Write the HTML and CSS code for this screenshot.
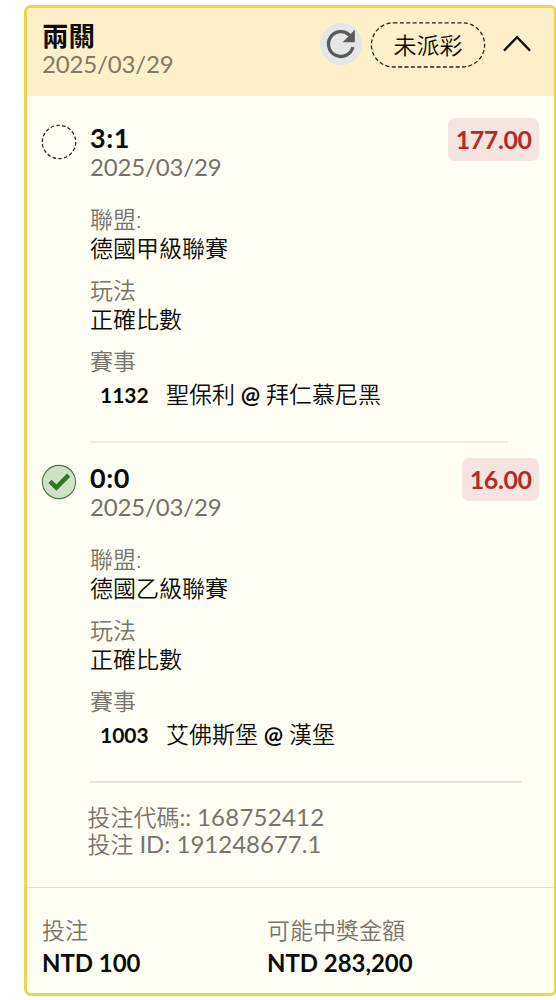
FILE: index.html
```html
<!DOCTYPE html>
<html lang="zh-Hant">
<head>
<meta charset="utf-8">
<title>兩關</title>
<link rel="stylesheet" href="styles.css">
</head>
<body>
<main class="card">
  <header class="card-head">
    <div class="head-text">
      <h1 class="title">兩關</h1>
      <p class="date">2025/03/29</p>
    </div>
    <div class="refresh">
      <svg width="42" height="42" viewBox="0 0 42 42" fill="none"><path d="M29.6 12.2A12.4 12.4 0 1 0 32.9 24.2" stroke="#58595b" stroke-width="3.3"/><path d="M34.8 6.8V19.2H22.6Z" fill="#58595b"/></svg>
    </div>
    <div class="status"><svg class="status-outline" width="116" height="46" viewBox="0 0 116 46" fill="none"><rect x="1.4" y=".8" width="113.2" height="44.2" rx="22.1" stroke="#29251a" stroke-width="1.3" stroke-dasharray="4 2.4"/></svg><span>未派彩</span></div>
    <svg class="chevron" width="28" height="18" viewBox="0 0 28 18" fill="none"><path d="M1 15.6 14 2.2 27 15.6" stroke="#111" stroke-width="2.3"/></svg>
  </header>

  <section class="leg">
    <svg class="mark" width="36" height="36" viewBox="0 0 36 36" fill="none"><circle cx="18" cy="18" r="16.7" stroke="#222" stroke-width="1.2" stroke-dasharray="3.6 2.2"/></svg>
    <div class="leg-body">
      <h2 class="score">3:1</h2>
      <p class="date">2025/03/29</p>
      <dl class="details">
        <dt>聯盟:</dt><dd>德國甲級聯賽</dd>
        <dt>玩法</dt><dd>正確比數</dd>
        <dt>賽事</dt><dd class="match"><b class="code">1132</b><span>聖保利 <span class="at">@</span> 拜仁慕尼黑</span></dd>
      </dl>
      <div class="rule"></div>
    </div>
    <div class="odds">177.00</div>
  </section>

  <section class="leg">
    <svg class="mark" width="36" height="36" viewBox="0 0 36 36" fill="none"><circle cx="18" cy="18" r="16.6" fill="#d1e1c8" stroke="#4f7549" stroke-width="1.1"/><path d="m9 17.4 6.4 6.2L27.6 11.2" stroke="#347425" stroke-width="4.6"/></svg>
    <div class="leg-body">
      <h2 class="score">0:0</h2>
      <p class="date">2025/03/29</p>
      <dl class="details">
        <dt>聯盟:</dt><dd>德國乙級聯賽</dd>
        <dt>玩法</dt><dd>正確比數</dd>
        <dt>賽事</dt><dd class="match"><b class="code">1003</b><span>艾佛斯堡 <span class="at">@</span> 漢堡</span></dd>
      </dl>
      <div class="rule rule-long"></div>
    </div>
    <div class="odds">16.00</div>
  </section>

  <div class="refs">
    <p><span class="cjk">投注代碼</span>:: <span class="num">168752412</span></p>
    <p><span class="cjk">投注</span> <span class="num id">ID: 191248677.1</span></p>
  </div>

  <footer class="totals">
    <div><p class="label">投注</p><p class="amount">NTD 100</p></div>
    <div><p class="label">可能中獎金額</p><p class="amount">NTD 283,200</p></div>
  </footer>
</main>
</body>
</html>
```
FILE: styles.css
```css
* { box-sizing: border-box; }
body, h1, h2, p, dl, dd { margin: 0; }
body {
  height: 1000px;
  overflow: hidden;
  padding: 5px 0 0 24px;
  background: #fff;
  color: #0b0b0a;
  font: 400 23px/28px Lato, "Noto Sans CJK TC", sans-serif;
}
.card {
  width: 533px;
  height: 991px;
  border: 3px solid #edd54f;
  border-radius: 7px;
  background: #fffef5;
  overflow: hidden;
  display: flex;
  flex-direction: column;
}
.card-head {
  flex: none;
  height: 88px;
  padding: 14px 23px 0 15px;
  background: #fef1ca;
  display: flex;
  align-items: flex-start;
}
.head-text { flex: 1; }
.title { font-size: 26.5px; line-height: 28px; font-weight: 700; }
.date { font-size: 24px; line-height: 28px; letter-spacing: -0.15px; color: #74716a; }
.card-head .date { color: #827a62; }
.refresh {
  width: 42px;
  height: 42px;
  margin: 1px 8px 0 0;
  border-radius: 50%;
  background: #e4e5e5;
}
.refresh svg { display: block; }
.status {
  display: grid;
  place-items: center;
  width: 116px;
  height: 46px;
}
.status > * { grid-area: 1 / 1; }
.status span, .details, .label, .cjk { font-family: Lato, "Noto Sans CJK TC DemiLight", "Noto Sans CJK TC", sans-serif; font-weight: 350; }
.chevron { margin: 13px 0 0 17px; }
.leg {
  flex: none;
  height: 340px;
  padding: 22px 15px 0 15px;
  display: flex;
  align-items: flex-start;
}
.mark { flex: none; margin: 6px 13px 0 -1px; }
.leg-body { flex: 1; width: 0; padding-top: 6px; }
.score { font-size: 27px; line-height: 28px; font-weight: 700; letter-spacing: 0.6px; }
.leg .date { padding-top: 1px; }
.details dt { color: #77746e; line-height: 29px; margin-top: 13px; }
.details dt:first-child { margin-top: 24px; }
.details dd { line-height: 29px; }
.details .match { display: flex; padding: 4px 0 0 10px; }
.code { width: 66px; font-size: 21px; font-weight: 700; }
.at { font-weight: 700; margin: 0 -0.5px; }
.rule { width: 418px; height: 2px; margin-top: 32px; background: #eeebe5; }
.rule-long { width: 432px; background: #e6e4df; }
.odds {
  margin-left: auto;
  height: 43px;
  padding: 0 7.5px;
  border-radius: 7px;
  background: #f6e5df;
  color: #b32c28;
  font-size: 25px;
  font-weight: 700;
  letter-spacing: -0.45px;
  line-height: 43px;
}
.refs {
  flex: none;
  height: 111px;
  padding: 28px 0 0 60.5px;
  color: #77746e;
  line-height: 26.5px;
}
.num { font-size: 24px; letter-spacing: 0.25px; }
.num.id { letter-spacing: 0; }
.totals {
  flex: 1;
  padding: 28px 15px 0;
  border-top: 1px solid #e0dfda;
  display: grid;
  grid-template-columns: 225px 1fr;
}
.label { color: #77746e; }
.amount { margin-top: 5px; font-size: 24px; font-weight: 700; letter-spacing: -0.05px; }
```
